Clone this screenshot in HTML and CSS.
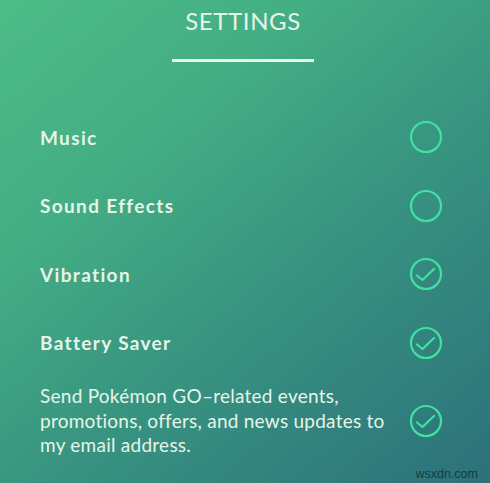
FILE: index.html
```html
<!DOCTYPE html>
<html>
<head>
<meta charset="utf-8">
<link rel="stylesheet" href="styles.css">
</head>
<body>
<div class="screen">
  <header class="head">
    <h1 class="title">SETTINGS</h1>
    <div class="rule"></div>
  </header>
  <ul class="list">
    <li class="row"><span class="label">Music</span>
      <svg class="toggle" viewBox="0 0 36 36"><circle cx="18" cy="18" r="15"/></svg></li>
    <li class="row"><span class="label">Sound Effects</span>
      <svg class="toggle" viewBox="0 0 36 36"><circle cx="18" cy="18" r="15"/></svg></li>
    <li class="row"><span class="label">Vibration</span>
      <svg class="toggle" viewBox="0 0 36 36"><circle cx="18" cy="18" r="15"/><path d="M9 19.5 L14.5 24 L26 13"/></svg></li>
    <li class="row"><span class="label">Battery Saver</span>
      <svg class="toggle" viewBox="0 0 36 36"><circle cx="18" cy="18" r="15"/><path d="M9 19.5 L14.5 24 L26 13"/></svg></li>
    <li class="row row-text"><span class="para">Send Pokémon GO–related events, promotions, offers, and news updates to my email address.</span>
      <svg class="toggle" viewBox="0 0 36 36"><circle cx="18" cy="18" r="15"/><path d="M9 19.5 L14.5 24 L26 13"/></svg></li>
  </ul>
  <div class="mark">wsxdn.com</div>
</div>
</body>
</html>
```
FILE: styles.css
```css
html, body {
  margin: 0;
  padding: 0;
}
.screen {
  position: relative;
  width: 490px;
  height: 483px;
  overflow: hidden;
  background: linear-gradient(140deg, #4dbc87 0%, #43ad84 30%, #379280 60%, #2c717b 100%);
  font-family: Lato, "Open Sans", sans-serif;
  color: #e6f5e8;
}
.head {
  display: flex;
  flex-direction: column;
  align-items: center;
  padding-top: 7px;
  margin-left: -4px;
}
.title {
  margin: 0;
  font-size: 24px;
  line-height: 28px;
  font-weight: 400;
  letter-spacing: 0.6px;
}
.rule {
  width: 142px;
  height: 3px;
  margin-top: 24px;
  background: #eaf6ea;
}
.list {
  list-style: none;
  margin: 41px 0 0;
  padding: 0 48px 0 40px;
}
.row {
  display: flex;
  align-items: center;
  justify-content: space-between;
  height: 68.5px;
}
.label {
  font-size: 19px;
  font-weight: 700;
  letter-spacing: 1.35px;
}
.row-text {
  height: auto;
  margin-top: 7px;
}
.para {
  width: 355px;
  font-size: 19px;
  line-height: 24.5px;
  font-weight: 400;
  letter-spacing: 0.25px;
}
.toggle {
  width: 36px;
  height: 36px;
  flex: none;
  margin-right: -2px;
  fill: none;
  stroke: #3fe2a3;
  stroke-width: 2.2;
  stroke-linecap: round;
  stroke-linejoin: round;
}
.mark {
  position: absolute;
  right: 12px;
  bottom: 2px;
  font-family: "Liberation Sans", Arial, sans-serif;
  font-size: 12.5px;
  color: #173c3c;
}
```
